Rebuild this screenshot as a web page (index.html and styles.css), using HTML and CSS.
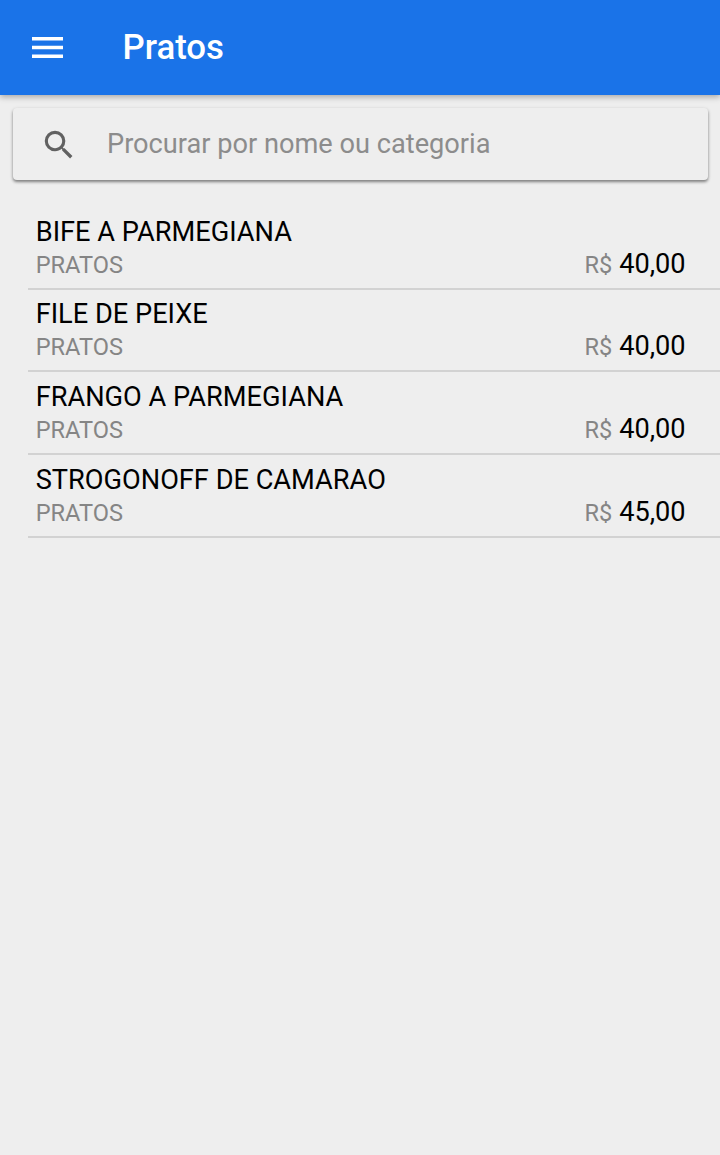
FILE: index.html
```html
<!DOCTYPE html>
<html lang="pt-BR">

<head>
    <meta charset="UTF-8">
    <meta name="viewport" content="width=device-width, initial-scale=1.0">
    <title>Pratos</title>
    <link rel="stylesheet" href="styles.css">
</head>

<body>

    <header class="toolbar">
        <svg class="menu-icon" viewBox="0 0 31 22">
            <path d="M0 0h31v3.5H0zM0 8.8h31v3.5H0zM0 17.6h31v3.5H0z" />
        </svg>
        <h1 class="toolbar-title">Pratos</h1>
    </header>

    <div class="search-bar">
        <svg class="search-icon" viewBox="0 0 24 24">
            <path d="M15.5 14h-.79l-.28-.27A6.471 6.471 0 0 0 16 9.5 6.5 6.5 0 1 0 9.5 16c1.61 0 3.09-.59 4.23-1.57l.27.28v.79l5 4.99L20.49 19l-4.99-5zm-6 0C7.01 14 5 11.99 5 9.5S7.01 5 9.5 5 14 7.01 14 9.5 11.99 14 9.5 14z" />
        </svg>
        <input type="text" class="search-input" placeholder="Procurar por nome ou categoria">
    </div>

    <ul class="list">
        <li class="item">
            <div class="item-name">BIFE A PARMEGIANA</div>
            <div class="item-info">
                <span class="category">PRATOS</span>
                <span class="price"><span class="currency">R$</span> 40,00</span>
            </div>
        </li>
        <li class="item">
            <div class="item-name">FILE DE PEIXE</div>
            <div class="item-info">
                <span class="category">PRATOS</span>
                <span class="price"><span class="currency">R$</span> 40,00</span>
            </div>
        </li>
        <li class="item">
            <div class="item-name">FRANGO A PARMEGIANA</div>
            <div class="item-info">
                <span class="category">PRATOS</span>
                <span class="price"><span class="currency">R$</span> 40,00</span>
            </div>
        </li>
        <li class="item">
            <div class="item-name">STROGONOFF DE CAMARAO</div>
            <div class="item-info">
                <span class="category">PRATOS</span>
                <span class="price"><span class="currency">R$</span> 45,00</span>
            </div>
        </li>
    </ul>

</body>

</html>
```

FILE: styles.css
```css
* {
    box-sizing: border-box;
}

body {
    margin: 0;
    min-height: 100vh;
    background: #eeeeee;
    color: #000;
    font-family: Roboto, sans-serif;
}

.toolbar {
    display: flex;
    align-items: center;
    height: 95px;
    padding-left: 32px;
    background: #1a73e8;
    color: #fff;
    box-shadow: 0 2px 6px rgba(0, 0, 0, 0.3);
}

.menu-icon {
    width: 31px;
    height: 22px;
    fill: #fff;
}

.toolbar-title {
    margin: 0 0 2px 59.5px;
    font-size: 34.8px;
    font-weight: 500;
    line-height: 40px;
}

.search-bar {
    display: flex;
    align-items: center;
    height: 72px;
    margin: 13px 12px 0 13px;
    padding-left: 27px;
    border-radius: 4px;
    background: #eeeeee;
    box-shadow: 0 2px 3px rgba(0, 0, 0, 0.42), 0 1px 4px rgba(0, 0, 0, 0.1);
}

.search-icon {
    width: 38px;
    height: 38px;
    margin-top: 2px;
    fill: #616161;
}

.search-input {
    flex: 1;
    margin-left: 29px;
    padding: 0;
    border: none;
    outline: none;
    background: transparent;
    font-family: inherit;
    font-size: 27.2px;
}

.search-input::placeholder {
    color: #8c8c8c;
}

.list {
    margin: 27px 0 0 28px;
    padding: 0;
    list-style: none;
}

.item {
    height: 82.7px;
    padding: 8.7px 34.4px 0 7.7px;
    border-bottom: 2px solid #d2d2d2;
}

.item-name {
    font-size: 27.2px;
    line-height: 32px;
}

.item-info {
    display: flex;
    justify-content: space-between;
    align-items: baseline;
    line-height: 32px;
}

.category,
.currency {
    color: #858585;
    font-size: 23.6px;
}

.price {
    font-size: 27.2px;
}
```
